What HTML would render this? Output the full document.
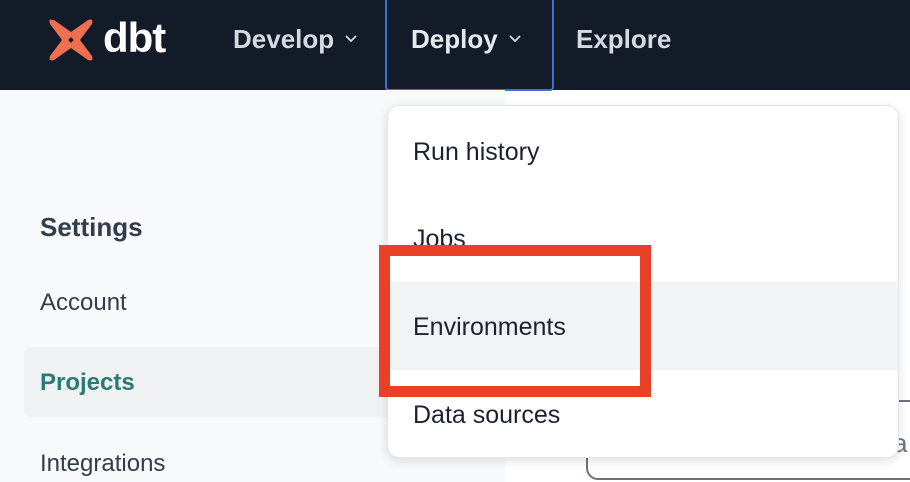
<!DOCTYPE html>
<html><head><style>
*{margin:0;padding:0;box-sizing:border-box}
body{width:910px;height:482px;overflow:hidden;font-family:"Liberation Sans",sans-serif;background:#fff;position:relative}
.nav{position:absolute;left:0;top:0;width:910px;height:90px;background:#131a28}
.nav .it{position:absolute;top:24px;color:#d6dae1;font-weight:bold;font-size:26px}
.side{position:absolute;left:0;top:90px;width:505px;height:392px;background:#f8f9fa}
.s{position:absolute;left:40px;font-size:24px;color:#333c4a}
.dd{position:absolute;left:387px;top:105px;width:512px;height:353px;background:#fff;border:1px solid #e3e6ea;border-radius:12px;box-shadow:0 3px 10px rgba(0,0,0,.12);overflow:hidden}
.dd div{position:absolute;left:25px;font-size:25px;color:#1a2130}
</style></head><body>
<div class="nav">
<svg style="position:absolute;left:46px;top:16px" width="50" height="48" viewBox="0 0 50 48"><path d="M6 4 Q2 2 4 8 L16 24 L4 40 Q2 46 8 44 L25 32 L42 44 Q48 46 46 40 L34 24 L46 8 Q48 2 42 4 L25 16 L8 4Z" fill="#ee6f50"/><rect x="23" y="22" width="4" height="4" fill="#131a28" transform="rotate(45 25 24)"/></svg>
<div style="position:absolute;left:103px;top:14px;color:#fff;font-weight:bold;font-size:42px;letter-spacing:-1px">dbt</div>
<div class="it" style="left:233px">Develop</div>
<svg style="position:absolute;left:344px;top:34px" width="14" height="10" viewBox="0 0 14 10"><path d="M2 2 L7 7 L12 2" stroke="#d6dae1" stroke-width="1.8" fill="none"/></svg>
<div style="position:absolute;left:385px;top:0;width:169px;height:91px;border:2px solid #3d6fd6;border-top:none;border-radius:0 0 4px 4px"></div>
<div class="it" style="left:411px;color:#e6e9ee">Deploy</div>
<svg style="position:absolute;left:508px;top:34px" width="14" height="10" viewBox="0 0 14 10"><path d="M2 2 L7 7 L12 2" stroke="#d6dae1" stroke-width="1.8" fill="none"/></svg>
<div class="it" style="left:576px">Explore</div>
</div>
<div class="side">
<div class="s" style="top:122px;font-weight:bold;font-size:26px">Settings</div>
<div class="s" style="top:199px">Account</div>
<div style="position:absolute;left:24px;top:257px;width:481px;height:70px;background:#eff1f3;border-radius:8px 0 0 8px"></div>
<div class="s" style="top:279px;font-weight:bold;color:#2b7a75">Projects</div>
<div class="s" style="top:360px">Integrations</div>
</div>
<div style="position:absolute;left:586px;top:400px;width:340px;height:80px;border:2px solid #6b7280;border-radius:12px"></div>
<div style="position:absolute;left:893px;top:428px;font-size:26px;color:#6b7280">a</div>
<div class="dd">
<div style="top:32px">Run history</div>
<div style="top:119px">Jobs</div>
<div style="left:0;top:176px;width:512px;height:88px;background:#f2f3f5"></div>
<div style="top:207px">Environments</div>
<div style="top:295px">Data sources</div>
</div>
<div style="position:absolute;left:379px;top:245px;width:272px;height:152px;border:11px solid #e94027"></div>
</body></html>
